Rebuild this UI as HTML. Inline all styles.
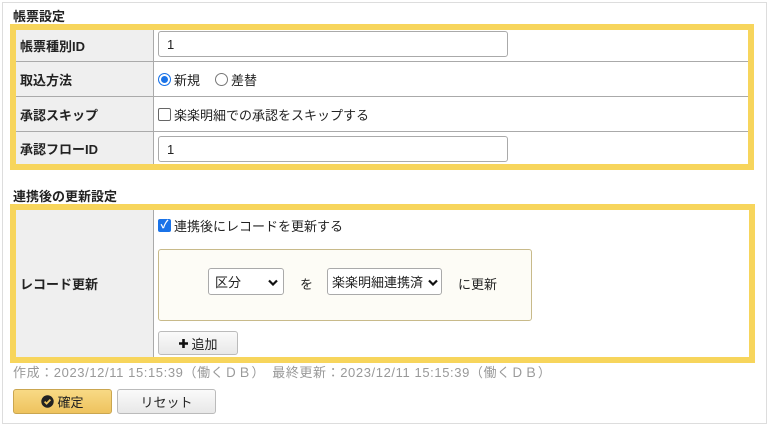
<!DOCTYPE html>
<html><head><meta charset="utf-8"><style>
*{box-sizing:border-box;margin:0;padding:0}
body{width:769px;height:427px;background:#fff;font-family:"Liberation Sans","Noto Sans CJK JP",sans-serif;font-size:13px;color:#222;position:relative;overflow:hidden}
.a{position:absolute}
.page{left:2px;top:2px;width:765px;height:422px;border:1px solid #ddd}
.frame{border:6px solid #f7d55c;background:#fff}
.lab{background:#efefef;font-weight:bold;font-size:13px;display:flex;align-items:center;padding-left:4px}
.hl{background:#aaa;height:1px}
.inp{border:1px solid #aaa;border-radius:3px;background:#fff;display:flex;align-items:center;padding-left:8px;font-size:13px}
.radio{width:13px;height:13px;border-radius:50%;border:1px solid #777;display:inline-block}
.radio.on{border:1px solid #1a73e8;box-shadow:inset 0 0 0 2px #fff;background:#1a73e8}
.cb{width:13px;height:13px;border:1px solid #666;border-radius:2px;display:inline-block}
.sel{border:1px solid #aaa;border-radius:3px;background:#fff;display:flex;align-items:center;padding-left:6px;font-size:13px}
.sel svg{position:absolute;right:5px;top:10px}
.btn{border:1px solid #bbb;border-radius:3px;background:linear-gradient(#fafafa,#e8e8e8);display:flex;align-items:center;justify-content:center;font-size:13px}
</style></head><body>
<div class="a page"></div>
<div class="a" style="left:13px;top:6px;font-weight:bold;font-size:13px">帳票設定</div>
<div class="a frame" style="left:10px;top:24px;width:744px;height:146px"></div>
<div class="a lab" style="left:16px;top:30px;width:137px;height:31px">帳票種別ID</div>
<div class="a lab" style="left:16px;top:62px;width:137px;height:34px">取込方法</div>
<div class="a lab" style="left:16px;top:97px;width:137px;height:34px">承認スキップ</div>
<div class="a lab" style="left:16px;top:132px;width:137px;height:32px">承認フローID</div>
<div class="a" style="left:153px;top:30px;width:1px;height:134px;background:#aaa"></div>
<div class="a hl" style="left:16px;top:61px;width:732px"></div>
<div class="a hl" style="left:16px;top:96px;width:732px"></div>
<div class="a hl" style="left:16px;top:131px;width:732px"></div>
<div class="a inp" style="left:158px;top:31px;width:350px;height:26px">1</div>
<div class="a" style="left:158px;top:70px;display:flex;align-items:center;gap:3px"><span class="radio on"></span><span>新規</span><span class="radio" style="margin-left:12px"></span><span>差替</span></div>
<div class="a" style="left:158px;top:105px;display:flex;align-items:center;gap:3px"><span class="cb"></span><span>楽楽明細での承認をスキップする</span></div>
<div class="a inp" style="left:158px;top:136px;width:350px;height:26px">1</div>

<div class="a" style="left:13px;top:186px;font-weight:bold;font-size:13px">連携後の更新設定</div>
<div class="a frame" style="left:10px;top:204px;width:745px;height:159px"></div>
<div class="a lab" style="left:16px;top:210px;width:137px;height:147px">レコード更新</div>
<div class="a" style="left:153px;top:210px;width:1px;height:147px;background:#aaa"></div>
<div class="a" style="left:158px;top:216px;display:flex;align-items:center;gap:3px"><span style="width:13px;height:13px;border-radius:2px;background:#1a73e8;color:#fff;font-size:11px;line-height:13px;text-align:center;font-weight:bold">✓</span><span>連携後にレコードを更新する</span></div>
<div class="a" style="left:158px;top:249px;width:374px;height:72px;background:#fdfcf6;border:1px solid #c8ba8a;border-radius:3px"></div>
<div class="a sel" style="left:208px;top:268px;width:76px;height:27px">区分<svg width="10" height="7" viewBox="0 0 10 7"><path d="M1 1.5L5 5.5L9 1.5" fill="none" stroke="#111" stroke-width="2.2"/></svg></div>
<div class="a" style="left:300px;top:274px">を</div>
<div class="a sel" style="left:327px;top:268px;width:115px;height:27px;padding-left:4px">楽楽明細連携済<svg width="10" height="7" viewBox="0 0 10 7" style="right:3px"><path d="M1 1.5L5 5.5L9 1.5" fill="none" stroke="#111" stroke-width="2.2"/></svg></div>
<div class="a" style="left:458px;top:274px">に更新</div>
<div class="a btn" style="left:158px;top:331px;width:80px;height:24px"><svg width="11" height="11" viewBox="0 0 11 11" style="margin-right:2px"><path d="M5.5 1V10M1 5.5H10" stroke="#111" stroke-width="2.6"/></svg>追加</div>

<div class="a" style="left:13px;top:362px;color:#999;font-size:13px;letter-spacing:0.6px">作成：2023/12/11 15:15:39（働くＤＢ）　最終更新：2023/12/11 15:15:39（働くＤＢ）</div>
<div class="a btn" style="left:13px;top:389px;width:99px;height:25px;background:linear-gradient(#f8da85,#eec35e);border-color:#caa650"><svg width="13" height="13" viewBox="0 0 13 13" style="margin-right:3px"><circle cx="6.5" cy="6.5" r="6.2" fill="#222"/><path d="M3.6 6.6L5.6 8.6L9.4 4.6" fill="none" stroke="#f0c860" stroke-width="1.8"/></svg>確定</div>
<div class="a btn" style="left:117px;top:389px;width:99px;height:25px">リセット</div>
</body></html>
